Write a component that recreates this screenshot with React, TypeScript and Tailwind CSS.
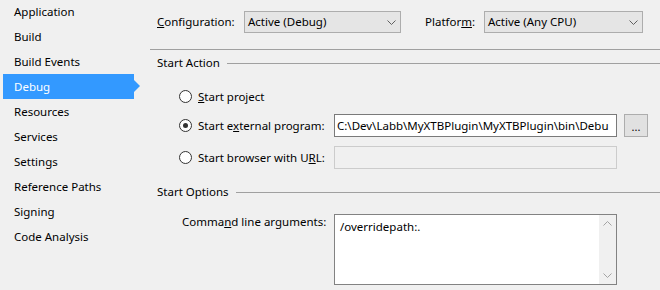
import { useState } from "react";

const navItems = [
    "Application",
    "Build",
    "Build Events",
    "Debug",
    "Resources",
    "Services",
    "Settings",
    "Reference Paths",
    "Signing",
    "Code Analysis",
];

function Chevron({ up = false, color = "#606060" }: { up?: boolean; color?: string }) {
    return (
        <svg width="9" height="5" viewBox="0 0 9 5" className="block">
            <path
                d={up ? "M0.5 4.5 L4.5 0.5 L8.5 4.5" : "M0.5 0.5 L4.5 4.5 L8.5 0.5"}
                fill="none"
                stroke={color}
                strokeWidth="1"
            />
        </svg>
    );
}

function Radio({ checked }: { checked?: boolean }) {
    return (
        <div className="w-[13px] h-[13px] rounded-full border border-[#333333] bg-white flex items-center justify-center shrink-0">
            {checked && <div className="w-[5px] h-[5px] rounded-full bg-[#333333]"></div>}
        </div>
    );
}

function Select({ value, width }: { value: string; width: string }) {
    return (
        <div className={`${width} h-[22px] bg-[#e5e5e5] border border-[#adadad] flex items-center justify-between pl-[3px] pr-[4px]`}>
            <span>{value}</span>
            <Chevron />
        </div>
    );
}

function SectionHeader({ title }: { title: string }) {
    return (
        <div className="h-[26px] flex items-center pl-[7px]">
            <span>{title}</span>
            <div className="grow ml-[7px] border-t border-[#a0a0a0]"></div>
        </div>
    );
}

export default function App() {
    const [active] = useState("Debug");

    return (
        <div
            className="w-[660px] h-[290px] bg-[#f0f0f0] flex text-[11.5px] leading-[16px] text-black overflow-hidden"
            style={{ fontFamily: '"Segoe UI", "Noto Sans", sans-serif' }}
        >
            {/* Sidebar */}
            <div className="w-[150px] shrink-0 -mt-px">
                {navItems.map((item) =>
                    item === active ? (
                        <div key={item} className="relative ml-[3px] w-[131px] h-[25px] bg-[#3399ff] text-white flex items-center pl-[11px]">
                            {item}
                            <div className="absolute left-[131px] top-[6px] w-0 h-0 border-y-[6px] border-y-transparent border-l-[6px] border-l-[#3399ff]"></div>
                        </div>
                    ) : (
                        <div key={item} className="h-[25px] flex items-center pl-[14px]">
                            {item}
                        </div>
                    )
                )}
            </div>

            {/* Main */}
            <div className="grow flex flex-col">
                <div className="h-[44px] flex items-center pl-[7px]">
                    <span className="w-[87px]">
                        <span className="underline">C</span>onfiguration:
                    </span>
                    <Select value="Active (Debug)" width="w-[157px]" />
                    <span className="ml-[24px] w-[59px]">
                        Platfor<span className="underline">m</span>:
                    </span>
                    <Select value="Active (Any CPU)" width="w-[159px]" />
                </div>
                <div className="mt-[5px] border-t border-[#a0a0a0]"></div>

                <SectionHeader title="Start Action" />

                <div className="pl-[29px]">
                    <div className="mt-[9px] h-[23px] flex items-center gap-[6px]">
                        <Radio />
                        <span>
                            <span className="underline">S</span>tart project
                        </span>
                    </div>
                    <div className="mt-[6px] h-[23px] flex items-center">
                        <Radio checked />
                        <span className="ml-[6px] w-[136px]">
                            Start e<span className="underline">x</span>ternal program:
                        </span>
                        <div className="w-[283px] h-[23px] bg-white border border-[#7a7a7a] flex items-center pl-[2px] overflow-hidden whitespace-nowrap">
                            C:\Dev\Labb\MyXTBPlugin\MyXTBPlugin\bin\Debu
                        </div>
                        <div className="ml-[7px] w-[24px] h-[23px] bg-[#e1e1e1] border border-[#adadad] flex items-end justify-center pb-[4px] text-[11px] leading-[11px]">
                            ...
                        </div>
                    </div>
                    <div className="mt-[9px] h-[23px] flex items-center">
                        <Radio />
                        <span className="ml-[6px] w-[136px]">
                            Start browser with U<span className="underline">R</span>L:
                        </span>
                        <div className="w-[283px] h-[23px] bg-[#f0f0f0] border border-[#cccccc]"></div>
                    </div>
                </div>

                <div className="mt-[10px]">
                    <SectionHeader title="Start Options" />
                </div>

                <div className="mt-[9px] flex pl-[32px]">
                    <span className="w-[152px]">
                        Comma<span className="underline">n</span>d line arguments:
                    </span>
                    <div className="w-[283px] h-[71px] bg-white border border-[#828282] flex">
                        <div className="grow pl-[5px] pt-[4px]">/overridepath:.</div>
                        <div className="w-[17px] bg-[#f0f0f0] flex flex-col items-center justify-between py-[6px]">
                            <Chevron up color="#a3a3a3" />
                            <Chevron color="#a3a3a3" />
                        </div>
                    </div>
                </div>
            </div>
        </div>
    );
}
